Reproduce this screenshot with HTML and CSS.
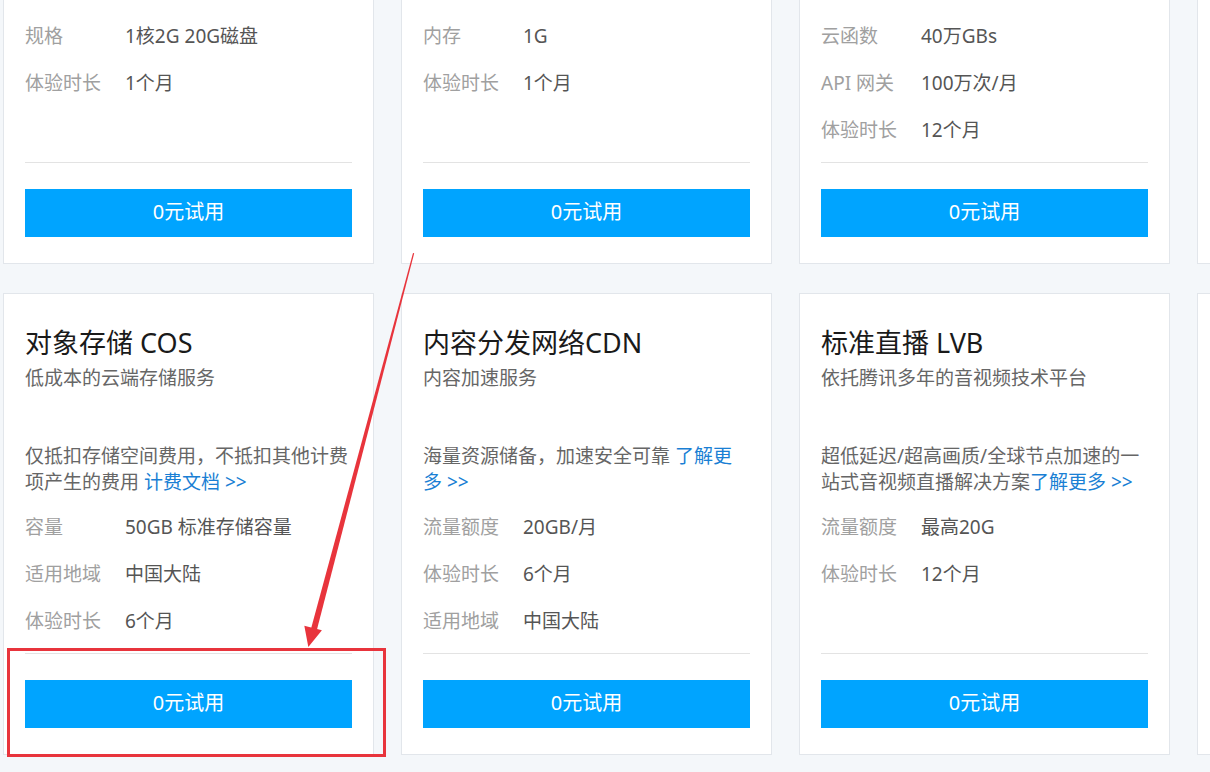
FILE: index.html
```html
<!DOCTYPE html>
<html lang="zh-CN">
<head>
  <meta charset="UTF-8" />
  <meta name="viewport" content="width=device-width, initial-scale=1.0"/>
  <title>免费体验</title>
  <link rel="stylesheet" href="styles.css">
</head>
<body>

  <div class="page">
    <div class="product-grid">

      <div class="card">
        <h3 class="card-title">云服务器 CVM</h3>
        <p class="card-sub">安全稳定的弹性计算服务</p>
        <p class="card-desc">新用户专享入门配置云服务器，开箱即用快速部署网站应用 <a href="#">了解更多 &gt;&gt;</a></p>
        <div class="specs">
          <div class="spec"><span class="spec-label">规格</span><span class="spec-value">1核2G 20G磁盘</span></div>
          <div class="spec"><span class="spec-label">体验时长</span><span class="spec-value">1个月</span></div>
        </div>
        <div class="divider"></div>
        <button class="try-btn">0元试用</button>
      </div>

      <div class="card">
        <h3 class="card-title">云数据库 Redis</h3>
        <p class="card-sub">高可用高可靠的缓存服务</p>
        <p class="card-desc">兼容开源协议，主从热备自动切换，数据持久化存储 <a href="#">了解更多 &gt;&gt;</a></p>
        <div class="specs">
          <div class="spec"><span class="spec-label">内存</span><span class="spec-value">1G</span></div>
          <div class="spec"><span class="spec-label">体验时长</span><span class="spec-value">1个月</span></div>
        </div>
        <div class="divider"></div>
        <button class="try-btn">0元试用</button>
      </div>

      <div class="card">
        <h3 class="card-title">无服务器云函数 SCF</h3>
        <p class="card-sub">事件驱动的无服务器计算平台</p>
        <p class="card-desc">无需管理服务器，按实际使用量计费，轻松构建后端应用服务 <a href="#">了解更多 &gt;&gt;</a></p>
        <div class="specs">
          <div class="spec"><span class="spec-label">云函数</span><span class="spec-value">40万GBs</span></div>
          <div class="spec"><span class="spec-label">API 网关</span><span class="spec-value">100万次/月</span></div>
          <div class="spec"><span class="spec-label">体验时长</span><span class="spec-value">12个月</span></div>
        </div>
        <div class="divider"></div>
        <button class="try-btn">0元试用</button>
      </div>

      <div class="card">
        <h3 class="card-title">云数据库 MySQL</h3>
        <p class="card-sub">稳定可靠的关系型数据库</p>
        <p class="card-desc">自动备份与容灾，轻松应对业务增长 <a href="#">了解更多 &gt;&gt;</a></p>
        <div class="specs">
          <div class="spec"><span class="spec-label">规格</span><span class="spec-value">1核1G</span></div>
          <div class="spec"><span class="spec-label">体验时长</span><span class="spec-value">1个月</span></div>
        </div>
        <div class="divider"></div>
        <button class="try-btn">0元试用</button>
      </div>

      <div class="card">
        <h3 class="card-title">对象存储 COS</h3>
        <p class="card-sub">低成本的云端存储服务</p>
        <p class="card-desc">仅抵扣存储空间费用，不抵扣其他计费项产生的费用 <a href="#">计费文档 &gt;&gt;</a></p>
        <div class="specs">
          <div class="spec"><span class="spec-label">容量</span><span class="spec-value">50GB 标准存储容量</span></div>
          <div class="spec"><span class="spec-label">适用地域</span><span class="spec-value">中国大陆</span></div>
          <div class="spec"><span class="spec-label">体验时长</span><span class="spec-value">6个月</span></div>
        </div>
        <div class="divider"></div>
        <button class="try-btn">0元试用</button>
      </div>

      <div class="card">
        <h3 class="card-title">内容分发网络CDN</h3>
        <p class="card-sub">内容加速服务</p>
        <p class="card-desc">海量资源储备，加速安全可靠 <a href="#">了解更多 &gt;&gt;</a></p>
        <div class="specs">
          <div class="spec"><span class="spec-label">流量额度</span><span class="spec-value">20GB/月</span></div>
          <div class="spec"><span class="spec-label">体验时长</span><span class="spec-value">6个月</span></div>
          <div class="spec"><span class="spec-label">适用地域</span><span class="spec-value">中国大陆</span></div>
        </div>
        <div class="divider"></div>
        <button class="try-btn">0元试用</button>
      </div>

      <div class="card">
        <h3 class="card-title">标准直播 LVB</h3>
        <p class="card-sub">依托腾讯多年的音视频技术平台</p>
        <p class="card-desc">超低延迟/超高画质/全球节点加速的一站式音视频直播解决方案<a href="#">了解更多 &gt;&gt;</a></p>
        <div class="specs">
          <div class="spec"><span class="spec-label">流量额度</span><span class="spec-value">最高20G</span></div>
          <div class="spec"><span class="spec-label">体验时长</span><span class="spec-value">12个月</span></div>
        </div>
        <div class="divider"></div>
        <button class="try-btn">0元试用</button>
      </div>

      <div class="card">
        <h3 class="card-title">云点播 VOD</h3>
        <p class="card-sub">一站式视频点播服务</p>
        <p class="card-desc">视频上传、转码、存储与分发一体化 <a href="#">了解更多 &gt;&gt;</a></p>
        <div class="specs">
          <div class="spec"><span class="spec-label">存储空间</span><span class="spec-value">10GB</span></div>
          <div class="spec"><span class="spec-label">体验时长</span><span class="spec-value">6个月</span></div>
        </div>
        <div class="divider"></div>
        <button class="try-btn">0元试用</button>
      </div>

    </div>
  </div>

  <!-- screenshot annotation -->
  <div class="mark-box"></div>
  <svg class="mark-arrow" width="1210" height="772" viewBox="0 0 1210 772">
    <polygon points="413,253 414.2,253.3 316.6,631 310.8,629.5" fill="#e8343c"/>
    <polygon points="304.3,625.7 321.9,630.3 308.3,647" fill="#e8343c"/>
  </svg>

</body>
</html>
```

FILE: styles.css
```css
* {
  box-sizing: border-box;
}

body {
  margin: 0;
  background: #f4f7fa;
  font-family: "Noto Sans", "Noto Sans CJK SC", sans-serif;
  overflow: hidden;
  height: 772px;
  position: relative;
}

.page {
  width: 100%;
  overflow: hidden;
}

.product-grid {
  display: grid;
  grid-template-columns: repeat(4, 371px);
  column-gap: 27px;
  row-gap: 29px;
  margin-top: -198px;
  padding-left: 3px;
}

.card {
  background: #fff;
  border: 1px solid #e2e6eb;
  padding: 31px 21px 26px;
  display: flex;
  flex-direction: column;
}

.card-title {
  margin: 0;
  font-size: 27px;
  line-height: 36px;
  font-weight: normal;
  color: #1a1a1a;
  white-space: nowrap;
}

.card-sub {
  margin: 4px 0 0;
  font-size: 19px;
  line-height: 27px;
  color: #666;
}

.card-desc {
  margin: 51px 0 0;
  height: 52px;
  font-size: 19px;
  line-height: 26px;
  color: #666;
  overflow: hidden;
}

.card-desc a {
  color: #1a7fd4;
  text-decoration: none;
}

.specs {
  margin-top: 9px;
  height: 141px;
}

.spec {
  display: flex;
  font-size: 19px;
  line-height: 47px;
}

.spec-label {
  width: 100px;
  flex-shrink: 0;
  color: #a0a0a0;
}

.spec-value {
  color: #555;
}

.divider {
  margin-top: 8px;
  border-top: 1px solid #e3e3e3;
}

.try-btn {
  margin-top: 26px;
  height: 48px;
  width: 100%;
  padding: 0 0 5px;
  border: none;
  background: #00a4ff;
  color: #fff;
  font-family: inherit;
  font-size: 20px;
  cursor: pointer;
}

.mark-box {
  position: absolute;
  left: 7px;
  top: 648px;
  width: 379px;
  height: 109px;
  border: 3px solid #e8343c;
}

.mark-arrow {
  position: absolute;
  left: 0;
  top: 0;
  pointer-events: none;
}
```
